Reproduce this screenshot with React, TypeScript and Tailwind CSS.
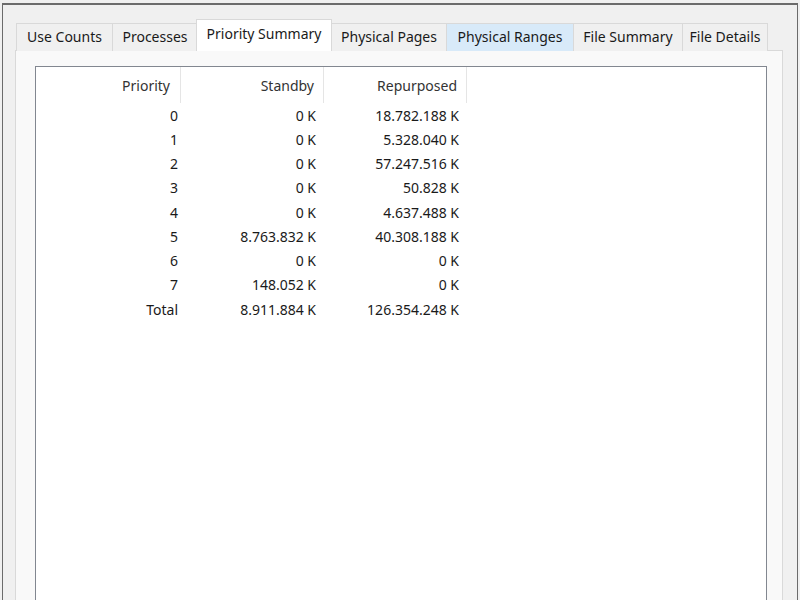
const tabs = [
  { label: 'Use Counts', w: 'w-[96px]' },
  { label: 'Processes', w: 'w-[85px]' },
  { label: 'Priority Summary', w: 'w-[136px]', selected: true },
  { label: 'Physical Pages', w: 'w-[115px]' },
  { label: 'Physical Ranges', w: 'w-[127px]', hover: true },
  { label: 'File Summary', w: 'w-[109px]' },
  { label: 'File Details', w: 'w-[86px]' },
];

const rows = [
  ['0', '0 K', '18.782.188 K'],
  ['1', '0 K', '5.328.040 K'],
  ['2', '0 K', '57.247.516 K'],
  ['3', '0 K', '50.828 K'],
  ['4', '0 K', '4.637.488 K'],
  ['5', '8.763.832 K', '40.308.188 K'],
  ['6', '0 K', '0 K'],
  ['7', '148.052 K', '0 K'],
  ['Total', '8.911.884 K', '126.354.248 K'],
];

export default function App() {
  return (
    <div className="w-[800px] h-[600px] overflow-hidden bg-[#f0f0f0] pt-[3px] px-[2px] font-['Noto_Sans',sans-serif] text-[14px]">
      <div className="h-full border-t-2 border-x border-[#6b6b6b] pl-[12px] pr-[14px] pt-[14px] flex flex-col">
        {/* tab strip */}
        <div className="flex items-end h-[32px] pl-[1px] relative z-10">
          {tabs.map((t) =>
            t.selected ? (
              <div
                key={t.label}
                className={`${t.w} h-[32px] -mx-[1px] bg-white border border-b-0 border-[#d9d9d9] flex items-center justify-center text-[#1a1a1a] pb-[5px]`}
              >
                {t.label}
              </div>
            ) : (
              <div
                key={t.label}
                className={`${t.w} h-[28px] border border-b-0 border-r-0 border-[#d9d9d9] last:border-r flex items-center justify-center text-[#1a1a1a] pb-[3px] ${
                  t.hover ? 'bg-[#d8eaf9] border-[#c5dcf0]' : 'bg-[#f0f0f0]'
                }`}
              >
                {t.label}
              </div>
            )
          )}
        </div>
        {/* panel */}
        <div className="flex-1 -mt-[1px] bg-[#f9f9f9] border border-b-0 border-[#d9d9d9] pl-[19px] pr-[15px] pt-[15px] flex flex-col">
          <div className="flex-1 bg-white border border-b-0 border-[#828790]">
            <div className="flex h-[36px] text-[#333]">
              <div className="w-[145px] flex items-center justify-end pr-[10px] border-r border-[#e5e5e5]">Priority</div>
              <div className="w-[143px] flex items-center justify-end pr-[9px] border-r border-[#e5e5e5]">Standby</div>
              <div className="w-[143px] flex items-center justify-end pr-[9px] border-r border-[#e5e5e5]">Repurposed</div>
            </div>
            {rows.map((r) => (
              <div key={r[0]} className="flex h-[24.25px] items-center text-[#1a1a1a]">
                <div className="w-[145px] text-right pr-[3px]">{r[0]}</div>
                <div className="w-[143px] text-right pr-[8px]">{r[1]}</div>
                <div className="w-[143px] text-right pr-[8px]">{r[2]}</div>
              </div>
            ))}
          </div>
        </div>
      </div>
    </div>
  );
}
